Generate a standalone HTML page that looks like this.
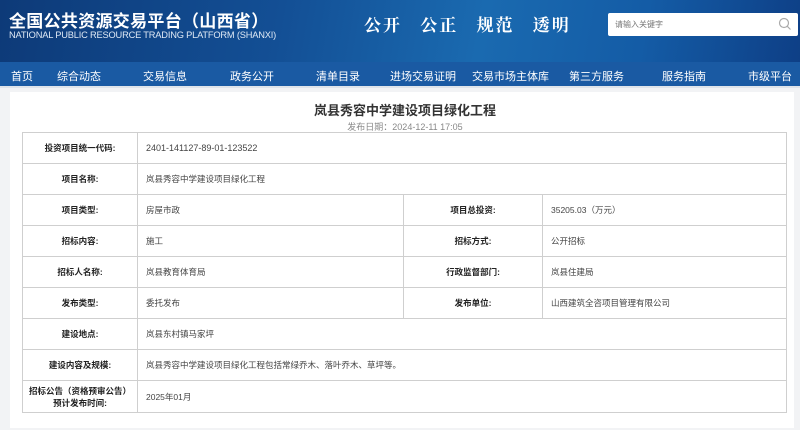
<!DOCTYPE html>
<html><head><meta charset="utf-8"><style>
*{margin:0;padding:0;box-sizing:border-box}
body{width:800px;height:430px;overflow:hidden;background:#f2f3f5;font-family:"Liberation Sans","Noto Sans CJK SC",sans-serif;position:relative}
.hd{position:absolute;left:0;top:0;width:800px;height:62px;background:linear-gradient(100deg,#0d3a78 0%,#134f95 35%,#1a6ab0 60%,#145ca6 80%,#0e3f86 100%)}
.t1{position:absolute;left:9px;top:7px;color:#fff;font-size:17px;font-weight:bold;letter-spacing:0.3px}
.t2{position:absolute;left:9px;top:30px;color:#dfe9f5;font-size:9.3px;letter-spacing:-0.2px}
.sl{position:absolute;left:364px;top:11px;color:#fff;font-size:17px;font-weight:bold;font-family:"Noto Serif CJK SC",serif;letter-spacing:2px;word-spacing:12px}
.sr{position:absolute;left:608px;top:13px;width:190px;height:23px;background:#fff;border-radius:2px;font-size:8px;color:#777;padding:6px 0 0 7px}
.sr svg{position:absolute;right:6px;top:4px}
.nav{position:absolute;left:0;top:62px;width:800px;height:26px;background:#1a5aa3;border-bottom:2px solid #dfe4ea}
.nav span{position:absolute;top:6px;color:#fff;font-size:11px}
.pn{position:absolute;left:10px;top:92px;width:784px;height:336px;background:#fff}
.ti{position:absolute;left:0;width:810px;top:100px;text-align:center;font-size:13px;font-weight:bold;color:#333}
.dt{position:absolute;left:0;width:810px;top:120px;text-align:center;font-size:9px;color:#888}
table{position:absolute;left:22px;top:132px;width:765px;border-collapse:collapse;font-size:8.5px;color:#444}
td{border:1px solid #cfcfcf;height:31px;padding:0 8px}
td.l{text-align:center;font-weight:bold;color:#222;width:115px;font-size:8.5px}
td.l2{text-align:center;font-weight:bold;color:#222;width:139px}
td.v{width:266px}
</style></head><body>
<div class="hd">
<div class="t1">全国公共资源交易平台（山西省）</div>
<div class="t2">NATIONAL PUBLIC RESOURCE TRADING PLATFORM (SHANXI)</div>
<div class="sl">公开 公正 规范 透明</div>
<div class="sr">请输入关键字<svg width="14" height="14" viewBox="0 0 14 14"><circle cx="6" cy="6" r="4.5" fill="none" stroke="#aaa" stroke-width="1.2"/><line x1="9.3" y1="9.3" x2="12.5" y2="12.5" stroke="#aaa" stroke-width="1.2"/></svg></div>
</div>
<div class="nav">
<span style="left:11px">首页</span><span style="left:57px">综合动态</span><span style="left:143px">交易信息</span><span style="left:230px">政务公开</span><span style="left:316px">清单目录</span><span style="left:390px">进场交易证明</span><span style="left:472px">交易市场主体库</span><span style="left:569px">第三方服务</span><span style="left:662px">服务指南</span><span style="left:748px">市级平台</span>
</div>
<div class="pn"></div>
<div class="ti">岚县秀容中学建设项目绿化工程</div>
<div class="dt">发布日期：2024-12-11 17:05</div>
<table>
<tr><td class="l">投资项目统一代码:</td><td colspan="3" style="font-size:9px">2401-141127-89-01-123522</td></tr>
<tr><td class="l">项目名称:</td><td colspan="3">岚县秀容中学建设项目绿化工程</td></tr>
<tr><td class="l">项目类型:</td><td class="v">房屋市政</td><td class="l2">项目总投资:</td><td>35205.03（万元）</td></tr>
<tr><td class="l">招标内容:</td><td class="v">施工</td><td class="l2">招标方式:</td><td>公开招标</td></tr>
<tr><td class="l">招标人名称:</td><td class="v">岚县教育体育局</td><td class="l2">行政监督部门:</td><td>岚县住建局</td></tr>
<tr><td class="l">发布类型:</td><td class="v">委托发布</td><td class="l2">发布单位:</td><td>山西建筑全咨项目管理有限公司</td></tr>
<tr><td class="l">建设地点:</td><td colspan="3">岚县东村镇马家坪</td></tr>
<tr><td class="l">建设内容及规模:</td><td colspan="3">岚县秀容中学建设项目绿化工程包括常绿乔木、落叶乔木、草坪等。</td></tr>
<tr><td class="l" style="height:32px;line-height:12px;padding:0 2px">招标公告（资格预审公告）<br>预计发布时间:</td><td colspan="3">2025年01月</td></tr>
</table>
</body></html>
